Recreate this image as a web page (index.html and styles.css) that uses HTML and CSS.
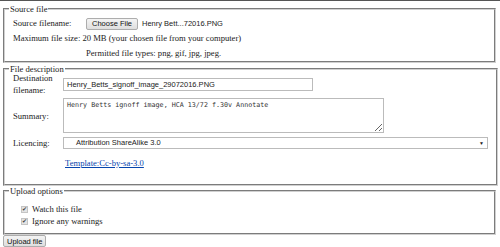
FILE: index.html
```html
<!DOCTYPE html>
<html lang="en">
<head>
  <meta charset="UTF-8" />
  <title>Upload file</title>
  <link rel="stylesheet" href="styles.css">
</head>
<body>
  <div class="top-bar"></div>
  <form class="upload-form">
    <fieldset class="box source-box">
      <legend>Source file</legend>
      <div class="row source-row">
        <span class="label wide">Source filename:</span>
        <span class="file-input">
          <button type="button" class="file-btn">Choose File</button>
          <span class="file-name">Henry Bett...72016.PNG</span>
        </span>
      </div>
      <div class="row">Maximum file size: 20 MB (your chosen file from your computer)</div>
      <div class="row permitted">Permitted file types: png, gif, jpg, jpeg.</div>
    </fieldset>

    <fieldset class="box desc-box">
      <legend>File description</legend>
      <div class="desc-grid">
        <span class="label">Destination filename:</span>
        <input class="text-input" type="text" value="Henry_Betts_signoff_image_29072016.PNG">
        <span class="label">Summary:</span>
        <textarea class="summary">Henry Betts ignoff image, HCA 13/72 f.30v Annotate</textarea>
        <span class="label">Licencing:</span>
        <div class="select">
          <span>Attribution ShareAlike 3.0</span>
          <span class="arrow">&#9660;</span>
        </div>
        <span></span>
        <a class="template-link" href="#">Template:Cc-by-sa-3.0</a>
      </div>
    </fieldset>

    <fieldset class="box options-box">
      <legend>Upload options</legend>
      <label class="check-row"><input type="checkbox" checked> Watch this file</label>
      <label class="check-row"><input type="checkbox" checked> Ignore any warnings</label>
    </fieldset>

    <button type="button" class="upload-btn">Upload file</button>
  </form>
</body>
</html>
```

FILE: styles.css
```css
body {
  margin: 0;
  font-family: "Liberation Serif", "Times New Roman", serif;
  font-size: 8.6px;
  color: #222;
  background: #fff;
}
.top-bar {
  height: 1px;
  background: #555;
}
.upload-form {
  padding: 3px 4px 0 3px;
}
.box {
  margin: 0;
  padding: 1px 8px 1px 8px;
  border: 2px groove #d0d0d0;
}
.box legend {
  padding: 0 1px;
  margin-left: -4px;
  line-height: 10px;
}
.source-box {
  padding-top: 2px;
  padding-bottom: 0;
}
.row {
  height: 15px;
  line-height: 15px;
  white-space: nowrap;
}
.source-row {
  display: flex;
  align-items: center;
}
.label.wide {
  width: 73px;
}
.file-input {
  display: flex;
  align-items: center;
  gap: 4px;
  font-family: "Liberation Sans", Arial, sans-serif;
  font-size: 7.5px;
}
.file-btn,
.upload-btn {
  font-family: "Liberation Sans", Arial, sans-serif;
  font-size: 7.5px;
  height: 12px;
  padding: 0 5px;
  border: 1px solid #adadad;
  border-radius: 2px;
  background: linear-gradient(#f4f4f4, #dedede);
  color: #111;
}
.permitted {
  padding-left: 73px;
}
.desc-box {
  margin-top: 1px;
  padding-top: 0;
  padding-bottom: 16px;
}
.desc-grid {
  display: grid;
  grid-template-columns: 50px 1fr;
  grid-template-rows: 20px 35px 11px auto;
  row-gap: 4px;
  align-items: center;
}
.desc-grid .label {
  line-height: 12px;
}
.text-input {
  width: 250px;
  height: 13px;
  box-sizing: border-box;
  border: 1px solid #bbb;
  padding: 0 3px;
  font-family: "Liberation Sans", Arial, sans-serif;
  font-size: 7.5px;
  color: #222;
}
.summary {
  width: 321px;
  height: 35px;
  box-sizing: border-box;
  border: 1px solid #bbb;
  padding: 2px 3px;
  font-family: "DejaVu Sans Mono", monospace;
  font-size: 6.7px;
  color: #333;
  resize: both;
}
.select {
  display: flex;
  justify-content: space-between;
  align-items: center;
  height: 12px;
  box-sizing: border-box;
  width: 425px;
  border: 1px solid #bbb;
  padding: 0 3px 0 12px;
  font-family: "Liberation Sans", Arial, sans-serif;
  font-size: 7.5px;
}
.select .arrow {
  font-size: 5px;
}
.template-link {
  color: #0645ad;
  margin: 6px 0 0 2px;
  line-height: 10px;
  justify-self: start;
}
.options-box {
  padding-top: 7px;
  padding-bottom: 6px;
}
.check-row {
  display: flex;
  align-items: center;
  height: 12px;
  padding-left: 8px;
}
.check-row input {
  appearance: none;
  position: relative;
  width: 7px;
  height: 7px;
  margin: 0 4px 0 0;
  border: 1px solid #c4c4c4;
  background: #e4e4e4;
  box-sizing: border-box;
}
.check-row input:checked::after {
  content: "\2714";
  position: absolute;
  left: 0;
  top: -2px;
  font-family: "DejaVu Sans", sans-serif;
  font-size: 6px;
  color: #444;
}
.upload-btn {
  margin-top: 0;
  padding: 0 3px;
}
```
